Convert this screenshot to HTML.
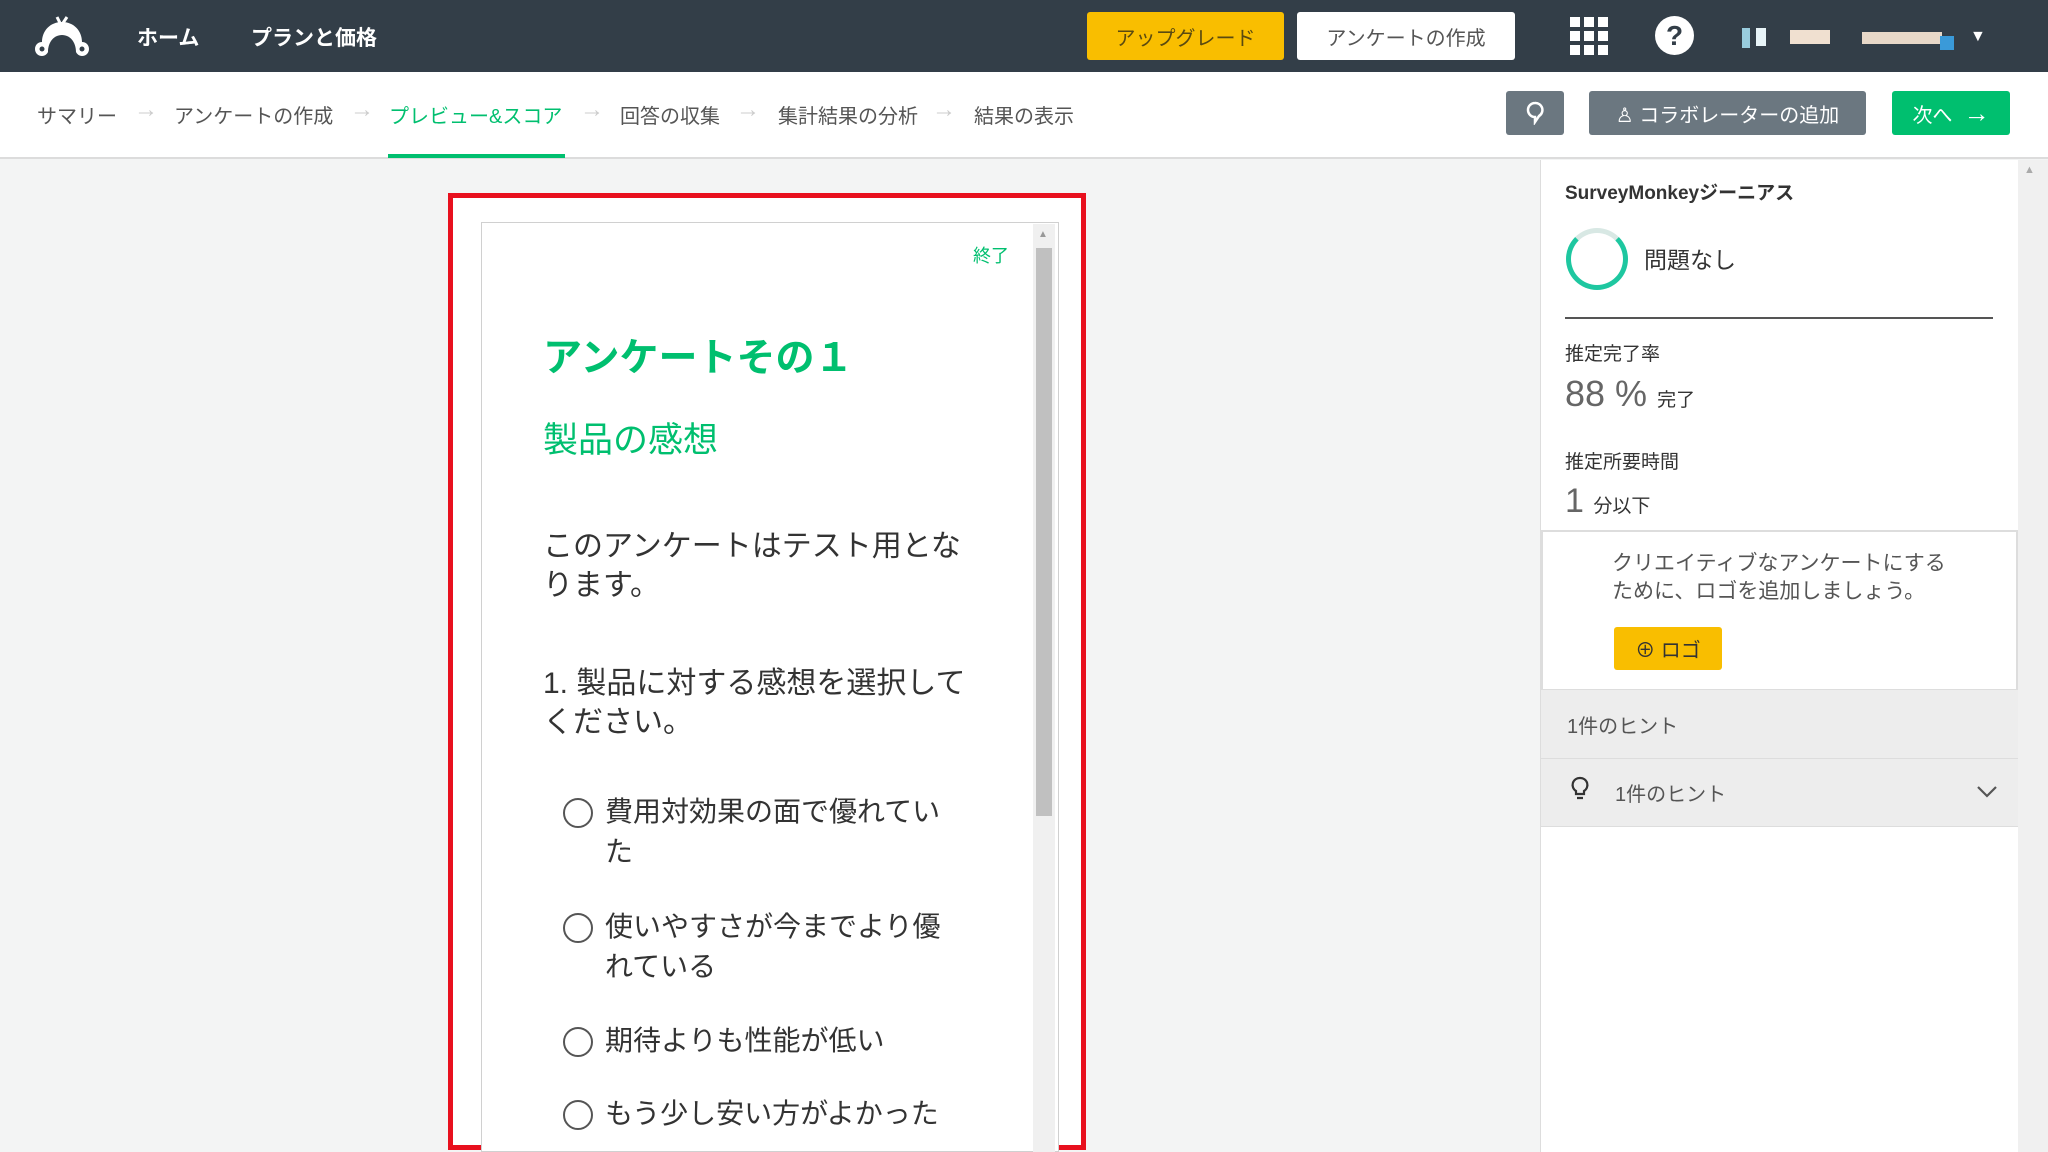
<!DOCTYPE html>
<html><head><meta charset="utf-8"><style>
*{margin:0;padding:0;box-sizing:border-box}
body{width:2048px;height:1152px;overflow:hidden;background:#f3f4f4;font-family:"Liberation Sans","Noto Sans CJK JP",sans-serif;position:relative;color:#333e48}
.a{position:absolute;white-space:nowrap}
.top{position:absolute;left:0;top:0;width:2048px;height:72px;background:#333e48}
.sub{position:absolute;left:0;top:72px;width:2048px;height:87px;background:#fff;border-bottom:2px solid #dcdcdc}
.nav{font-size:20px;color:#555;top:100px}
.arr{font-size:24px;color:#ccc;top:96px}
.btn{position:absolute;border-radius:3px;display:flex;align-items:center;justify-content:center}
.opt{position:absolute;left:563px;width:30px;height:30px;border:2px solid #555;border-radius:50%}
.ot{font-size:28px;color:#333;left:605px;line-height:40px;white-space:normal;width:340px}
</style></head><body>
<div class="top"></div>
<svg class="a" style="left:33px;top:16px" width="58" height="44" viewBox="0 0 58 44"><path d="M29 6c-12 0-20 9-20 20v0c-4 0-7 3-7 7s3 7 7 7c3 0 5-2 6-4 0-10 6-17 14-17s14 7 14 17c1 2 3 4 6 4 4 0 7-3 7-7s-3-7-7-7c0-11-8-20-20-20z" fill="#fff"/><path d="M27 7l-3-6M30 7l4-6" stroke="#fff" stroke-width="3"/><circle cx="9" cy="33" r="2.5" fill="#333e48"/><circle cx="49" cy="33" r="2.5" fill="#333e48"/></svg>
<div class="a" style="left:137px;top:22px;font-size:21px;color:#fff;font-weight:bold">ホーム</div>
<div class="a" style="left:251px;top:22px;font-size:21px;color:#fff;font-weight:bold">プランと価格</div>
<div class="btn" style="left:1087px;top:12px;width:197px;height:48px;background:#f9be00;font-size:20px;color:#5a4a10">アップグレード</div>
<div class="btn" style="left:1297px;top:12px;width:218px;height:48px;background:#fff;font-size:20px;color:#555">アンケートの作成</div>
<svg class="a" style="left:1570px;top:17px" width="38" height="38"><g fill="#fff"><rect x="0" y="0" width="10" height="10"/><rect x="14" y="0" width="10" height="10"/><rect x="28" y="0" width="10" height="10"/><rect x="0" y="14" width="10" height="10"/><rect x="14" y="14" width="10" height="10"/><rect x="28" y="14" width="10" height="10"/><rect x="0" y="28" width="10" height="10"/><rect x="14" y="28" width="10" height="10"/><rect x="28" y="28" width="10" height="10"/></g></svg>
<div class="a" style="left:1655px;top:16px;width:39px;height:39px;border-radius:50%;background:#fff;color:#333e48;font-size:28px;font-weight:bold;text-align:center;line-height:39px">?</div>
<div class="a" style="left:1742px;top:28px;width:8px;height:20px;background:#9cd"></div>
<div class="a" style="left:1756px;top:28px;width:10px;height:18px;background:#e8f4f8"></div>
<div class="a" style="left:1790px;top:30px;width:40px;height:14px;background:#f0e0d0"></div>
<div class="a" style="left:1862px;top:32px;width:80px;height:12px;background:#e8d8c8"></div>
<div class="a" style="left:1940px;top:36px;width:14px;height:14px;background:#3a9ad9"></div>
<div class="a" style="left:1970px;top:28px;font-size:16px;color:#fff">▼</div>

<div class="sub"></div>
<div class="a nav" style="left:37px">サマリー</div>
<div class="a arr" style="left:134px">→</div>
<div class="a nav" style="left:174px">アンケートの作成</div>
<div class="a arr" style="left:350px">→</div>
<div class="a nav" style="left:389px;color:#00bf6f">プレビュー&amp;スコア</div>
<div class="a arr" style="left:580px">→</div>
<div class="a nav" style="left:620px">回答の収集</div>
<div class="a arr" style="left:736px">→</div>
<div class="a nav" style="left:778px">集計結果の分析</div>
<div class="a arr" style="left:932px">→</div>
<div class="a nav" style="left:974px">結果の表示</div>
<div class="a" style="left:388px;top:154px;width:177px;height:4px;background:#00bf6f"></div>
<div class="btn" style="left:1506px;top:91px;width:58px;height:44px;background:#6b7780"><svg width="20" height="24" viewBox="0 0 20 24"><path d="M10 2a7 7 0 1 0 0 14v5l4-6a7 7 0 0 0-4-13z" fill="none" stroke="#fff" stroke-width="2.5"/></svg></div>
<div class="btn" style="left:1589px;top:91px;width:277px;height:44px;background:#6b7780;color:#fff;font-size:20px">&#9817;&nbsp;コラボレーターの追加</div>
<div class="btn" style="left:1892px;top:91px;width:118px;height:44px;background:#00bf6f;color:#fff;font-size:20px">次へ&nbsp;&nbsp;<span style="font-size:26px">→</span></div>

<!-- preview -->
<div class="a" style="left:448px;top:193px;width:638px;height:957px;border:5px solid #e8101e;background:#fff"></div>
<div class="a" style="left:481px;top:222px;width:578px;height:930px;border:1px solid #d0d0d0;background:#fff"></div>
<div class="a" style="left:1033px;top:224px;width:22px;height:928px;background:#f0f0f0"></div>
<div class="a" style="left:1036px;top:248px;width:16px;height:568px;background:#c0c0c0"></div>
<div class="a" style="left:1038px;top:229px;font-size:10px;color:#999">▲</div>
<div class="a" style="left:973px;top:242px;font-size:18px;color:#00bf6f">終了</div>
<div class="a" style="left:543px;top:327px;font-size:39px;color:#00bf6f;font-weight:bold">アンケートその１</div>
<div class="a" style="left:543px;top:412px;font-size:35px;color:#00bf6f">製品の感想</div>
<div class="a" style="left:543px;top:527px;font-size:30px;color:#333;line-height:39px;white-space:normal;width:440px">このアンケートはテスト用となります。</div>
<div class="a" style="left:543px;top:664px;font-size:30px;color:#333;line-height:39px;white-space:normal;width:440px">1. 製品に対する感想を選択してください。</div>
<div class="opt" style="top:798px"></div><div class="a ot" style="top:792px">費用対効果の面で優れていた</div>
<div class="opt" style="top:913px"></div><div class="a ot" style="top:907px">使いやすさが今までより優れている</div>
<div class="opt" style="top:1027px"></div><div class="a ot" style="top:1021px">期待よりも性能が低い</div>
<div class="opt" style="top:1100px"></div><div class="a ot" style="top:1094px">もう少し安い方がよかった</div>

<!-- right panel -->
<div class="a" style="left:1540px;top:160px;width:478px;height:992px;background:#fff;border-left:1px solid #ddd"></div>
<div class="a" style="left:2018px;top:160px;width:30px;height:992px;background:#f0f0f0"></div>
<div class="a" style="left:2024px;top:164px;font-size:11px;color:#aaa">▲</div>
<div class="a" style="left:1565px;top:178px;font-size:19px;font-weight:bold;color:#333">SurveyMonkeyジーニアス</div>
<div class="a" style="left:1566px;top:228px;width:62px;height:62px;border-radius:50%;border:5px solid #1ec7a0;border-top-color:#d8e8e4"></div>
<div class="a" style="left:1644px;top:241px;font-size:23px;color:#333">問題なし</div>
<div class="a" style="left:1565px;top:317px;width:428px;height:2px;background:#555"></div>
<div class="a" style="left:1565px;top:339px;font-size:19px;color:#333">推定完了率</div>
<div class="a" style="left:1565px;top:373px;font-size:36px;color:#666">88 % <span style="font-size:19px;color:#333">完了</span></div>
<div class="a" style="left:1565px;top:447px;font-size:19px;color:#333">推定所要時間</div>
<div class="a" style="left:1565px;top:482px;font-size:34px;color:#666">1 <span style="font-size:19px;color:#333">分以下</span></div>
<div class="a" style="left:1541px;top:530px;width:477px;height:161px;border:2px solid #ddd;background:#fff"></div>
<div class="a" style="left:1612px;top:550px;font-size:21px;color:#555;line-height:28px">クリエイティブなアンケートにする<br>ために、ロゴを追加しましょう。</div>
<div class="btn" style="left:1614px;top:627px;width:108px;height:43px;background:#f9be00;color:#333;font-size:20px">⊕ ロゴ</div>
<div class="a" style="left:1541px;top:690px;width:477px;height:69px;background:#ededed;border-bottom:1px solid #ddd"></div>
<div class="a" style="left:1567px;top:710px;font-size:20px;color:#555">1件のヒント</div>
<div class="a" style="left:1541px;top:759px;width:477px;height:68px;background:#ededed;border-bottom:1px solid #ddd"></div>
<svg class="a" style="left:1570px;top:776px" width="20" height="26" viewBox="0 0 20 26"><path d="M10 2a7 7 0 0 0-4 13v3h8v-3a7 7 0 0 0-4-13zM7 22h6" fill="none" stroke="#333" stroke-width="2.2"/></svg>
<div class="a" style="left:1615px;top:778px;font-size:20px;color:#555">1件のヒント</div>
<svg class="a" style="left:1976px;top:785px" width="22" height="14"><path d="M2 2l9 9 9-9" fill="none" stroke="#555" stroke-width="2.2"/></svg>
</body></html>
